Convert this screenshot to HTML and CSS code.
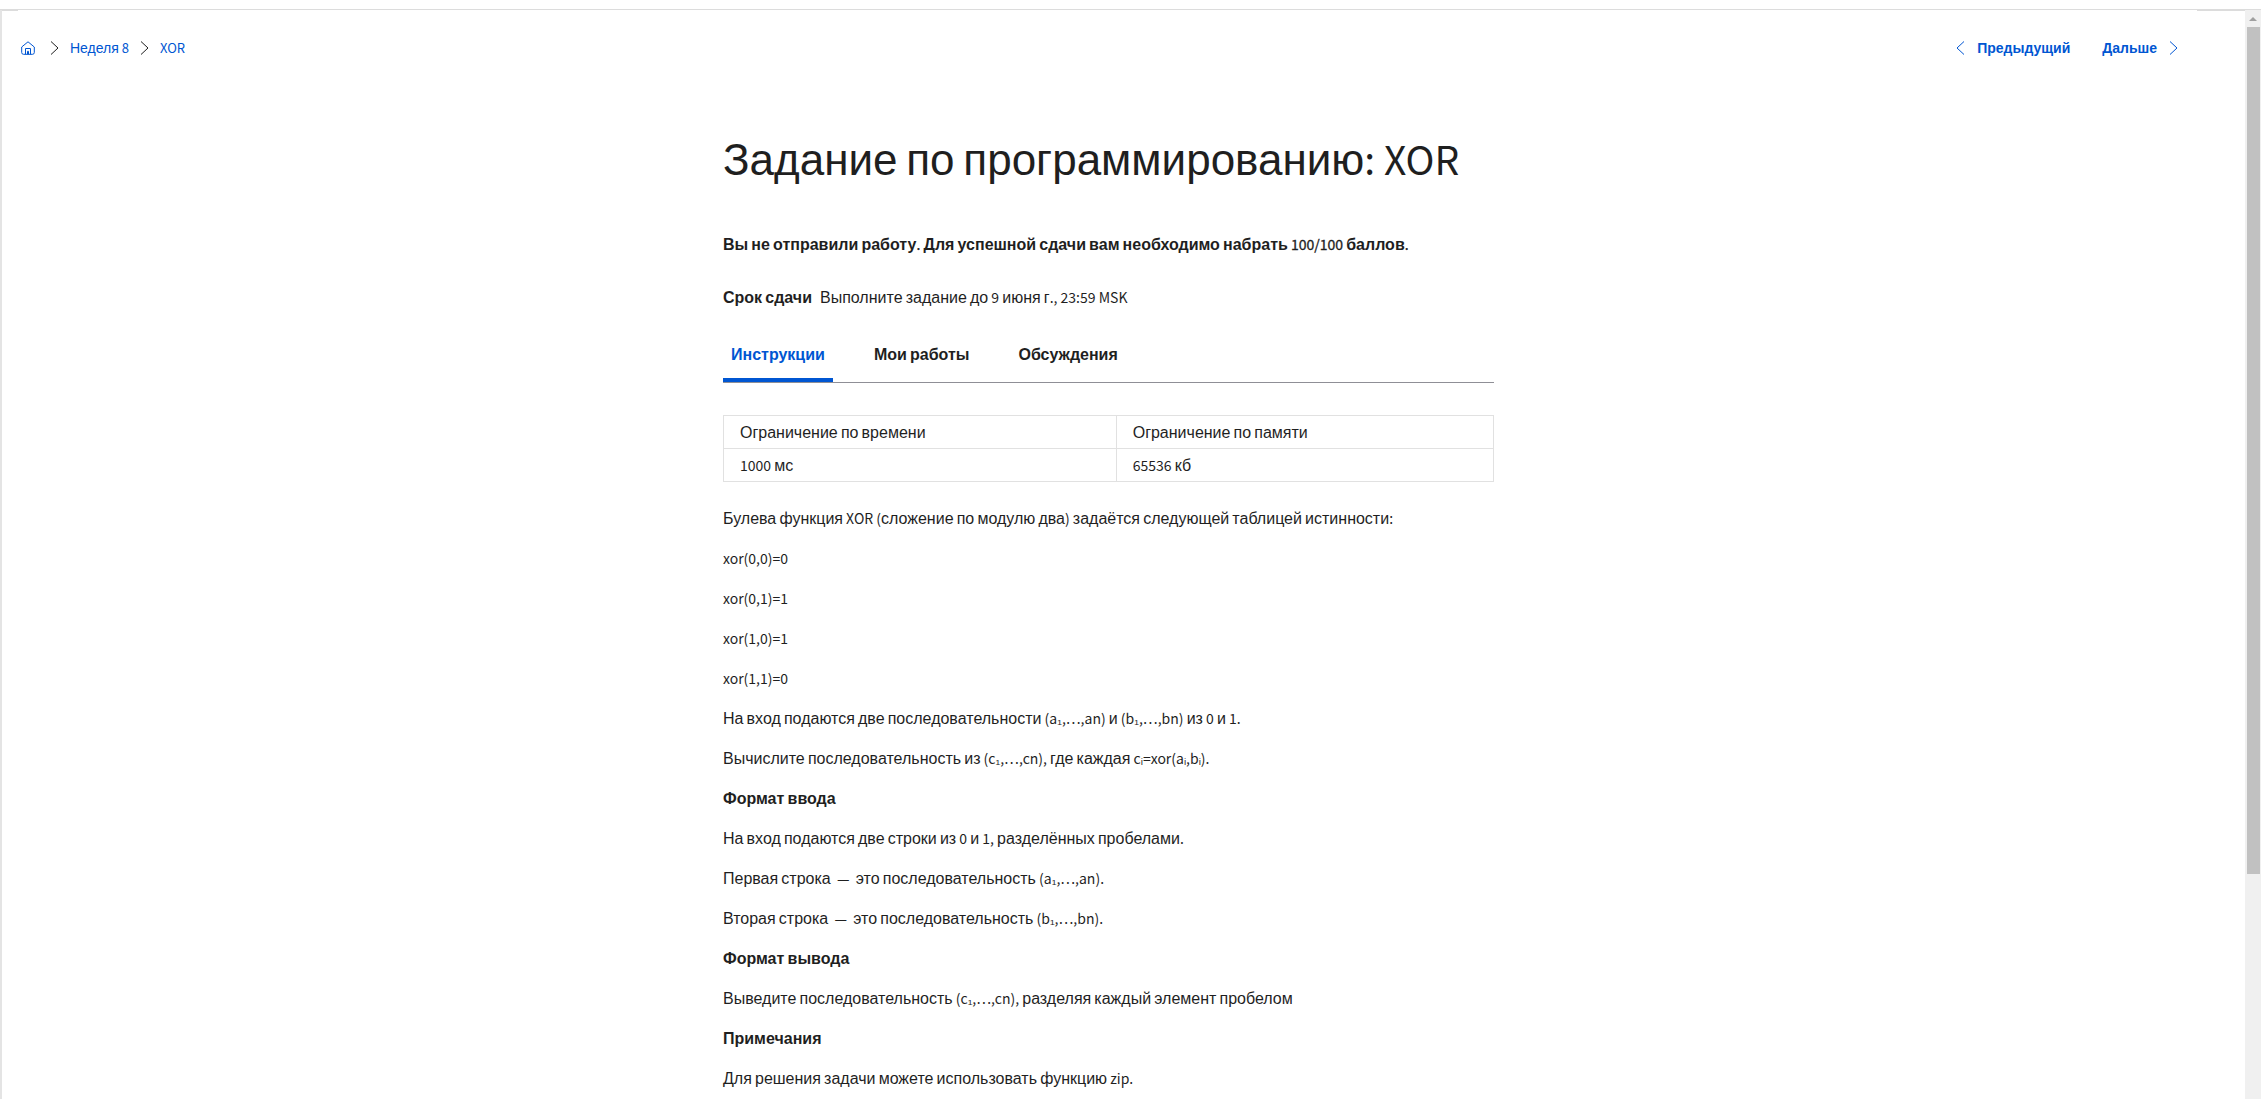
FILE: index.html
```html
<!DOCTYPE html>
<html lang="ru">
<head>
<meta charset="utf-8">
<title>Задание по программированию: XOR</title>
<link rel="stylesheet" href="styles.css">
</head>
<body>
<div class="frame">
  <div class="page">
    <header class="topbar">
      <nav class="breadcrumbs" aria-label="Навигация">
        <a href="#" aria-label="Главная"><svg class="home" viewBox="0 0 14 14"><path d="M.7 6 7 .8 13.300 6v5.500q0 1.800-1.800 1.800h-9q-1.800 0-1.800-1.800zM4.500 13.300V7.500h5v5.800M6.500 13.300v-3h1v3"/></svg></a>
        <svg class="chevron dark" viewBox="0 0 9 14"><path d="M1 .5 8 7 1 13.500"/></svg>
        <a href="#">Неделя 8</a>
        <svg class="chevron dark" viewBox="0 0 9 14"><path d="M1 .5 8 7 1 13.500"/></svg>
        <a href="#">XOR</a>
      </nav>
      <nav class="pager" aria-label="Элементы курса">
        <a href="#"><svg class="chevron" viewBox="0 0 9 14"><path d="M8 .5 1 7l7 6.500"/></svg>Предыдущий</a>
        <a href="#">Дальше<svg class="chevron" viewBox="0 0 9 14"><path d="M1 .5 8 7 1 13.500"/></svg></a>
      </nav>
    </header>
    <main class="content">
      <h1>Задание по программированию: XOR</h1>
      <p class="status">Вы не отправили работу. Для успешной сдачи вам необходимо набрать 100/100 баллов.</p>
      <p class="deadline"><strong>Срок сдачи</strong><span>Выполните задание до 9 июня г., 23:59 MSK</span></p>
      <div class="tabs" role="tablist">
        <button class="tab active" role="tab" aria-selected="true">Инструкции</button>
        <button class="tab" role="tab">Мои работы</button>
        <button class="tab" role="tab">Обсуждения</button>
      </div>
      <table class="limits">
        <tr><td>Ограничение по времени</td><td>Ограничение по памяти</td></tr>
        <tr><td>1000 мс</td><td>65536 кб</td></tr>
      </table>
      <section class="task">
        <p>Булева функция XOR (сложение по модулю два) задаётся следующей таблицей истинности:</p>
        <p>xor(0,0)=0</p>
        <p>xor(0,1)=1</p>
        <p>xor(1,0)=1</p>
        <p>xor(1,1)=0</p>
        <p>На вход подаются две последовательности (a₁,…,an) и (b₁,…,bn) из 0 и 1.</p>
        <p>Вычислите последовательность из (c₁,…,cn), где каждая cᵢ=xor(aᵢ,bᵢ).</p>
        <h2>Формат ввода</h2>
        <p>На вход подаются две строки из 0 и 1, разделённых пробелами.</p>
        <p>Первая строка&nbsp; — &nbsp;это последовательность (a₁,…,an).</p>
        <p>Вторая строка&nbsp; — &nbsp;это последовательность (b₁,…,bn).</p>
        <h2>Формат вывода</h2>
        <p>Выведите последовательность (c₁,…,cn), разделяя каждый элемент пробелом</p>
        <h2>Примечания</h2>
        <p>Для решения задачи можете использовать функцию zip.</p>
      </section>
    </main>
  </div>
  <div class="scrollbar" aria-hidden="true"><i class="arrow"></i><i class="thumb"></i></div>
</div>
<script src="script.js"></script>
</body>
</html>
```
FILE: styles.css
```css
* { box-sizing: border-box; }
body {
  --latin-size: 14px;
  margin: 0;
  height: 100vh;
  padding-top: 9px;
  overflow: hidden;
  background: #fff;
  color: #1f1f1f;
  font: 16px/24px "Liberation Sans", Arial, sans-serif;
}
/* Latin letters, digits and punctuation have a face and size of their own */
.lat {
  font-family: "Noto Sans CJK SC", "Liberation Sans", sans-serif;
  font-size: var(--latin-size);
  line-height: 1;
}
.frame {
  display: flex;
  height: 100%;
  border-top: 1px solid #dcdcdc;
  background:
    linear-gradient(#dcdcdc, #dcdcdc) left top / 18px 1px no-repeat,
    linear-gradient(#dcdcdc, #dcdcdc) right top / 64px 1px no-repeat;
}
.page {
  flex: 1;
  overflow: hidden;
  padding-right: 30px;
  border-left: 2px solid #e4e4e4;
}
.topbar {
  --latin-size: 13px;
  display: flex;
  justify-content: space-between;
  padding: 25px 37px 0 19px;
  font-size: 14px;
  line-height: 24px;
}
.breadcrumbs, .pager, .pager a { display: flex; align-items: center; }
.breadcrumbs { gap: 11px; padding-top: 1px; }
.pager { gap: 32px; font-weight: 700; }
.pager a { gap: 12px; }
a { color: #0056d2; text-decoration: none; }
svg { display: block; fill: none; stroke: #0056d2; }
.home { width: 14px; height: 14px; margin-right: 4px; }
.chevron { width: 9px; height: 14px; }
.dark { stroke: #1f1f1f; }
.content { max-width: 771px; margin: 72px auto 0; }
h1 {
  --latin-size: 39px;
  margin: 0;
  font-size: 44px;
  line-height: 56px;
  font-weight: 400;
  white-space: nowrap;
}
.status { margin: 45px 0 0; font-weight: 700; white-space: nowrap; }
.status .lat { font-weight: 400; -webkit-text-stroke: 0.3px; }
.deadline { display: flex; gap: 8px; margin: 29px 0 0; }
.tabs { display: flex; margin-top: 29px; border-bottom: 1px solid #8f8f96; }
.tab {
  padding: 4px 8px 11px;
  margin-right: 33px;
  border: 0;
  border-bottom: 4px solid transparent;
  background: none;
  color: #1f1f1f;
  font: inherit;
  font-weight: 700;
}
.active { color: #0056d2; border-bottom-color: #0056d2; border-radius: 2px 2px 0 0; }
.limits { width: 100%; margin: 32px 0 25px; border-collapse: collapse; }
.limits td { height: 33px; padding: 1px 16px 0; border: 1px solid #e1e1e1; }
.limits td:first-child { width: 51%; }
.task p, .task h2 { margin: 0 0 16px; font-size: 16px; line-height: 24px; }
.scrollbar {
  display: flex;
  flex-direction: column;
  align-items: center;
  width: 16px;
  background: #f0f0f0;
}
.scrollbar::after { content: ""; flex: 21; }
.arrow {
  margin: 7px 0 6px;
  border: 4px solid transparent;
  border-top: 0;
  border-bottom-color: #a0a0a0;
}
.thumb { flex: 79; width: 13px; background: #c1c1c1; }
```
FILE: script.js
```js
// Wraps each run of non-Cyrillic characters so that it takes the Latin face.
const walker = document.createTreeWalker(document.body, NodeFilter.SHOW_TEXT);
const nodes = [];
while (walker.nextNode()) nodes.push(walker.currentNode);
for (const node of nodes) {
  if (!node.data.trim() || node.parentNode.nodeName === 'SCRIPT') continue;
  const run = document.createElement('span');
  for (const part of node.data.split(/([\u0400-\u04ff]+)/)) {
    if (!part) continue;
    if (/[\u0400-\u04ff]/.test(part)) {
      run.append(part);
    } else {
      const latin = document.createElement('span');
      latin.className = 'lat';
      latin.textContent = part;
      run.append(latin);
    }
  }
  node.replaceWith(run);
}
```
